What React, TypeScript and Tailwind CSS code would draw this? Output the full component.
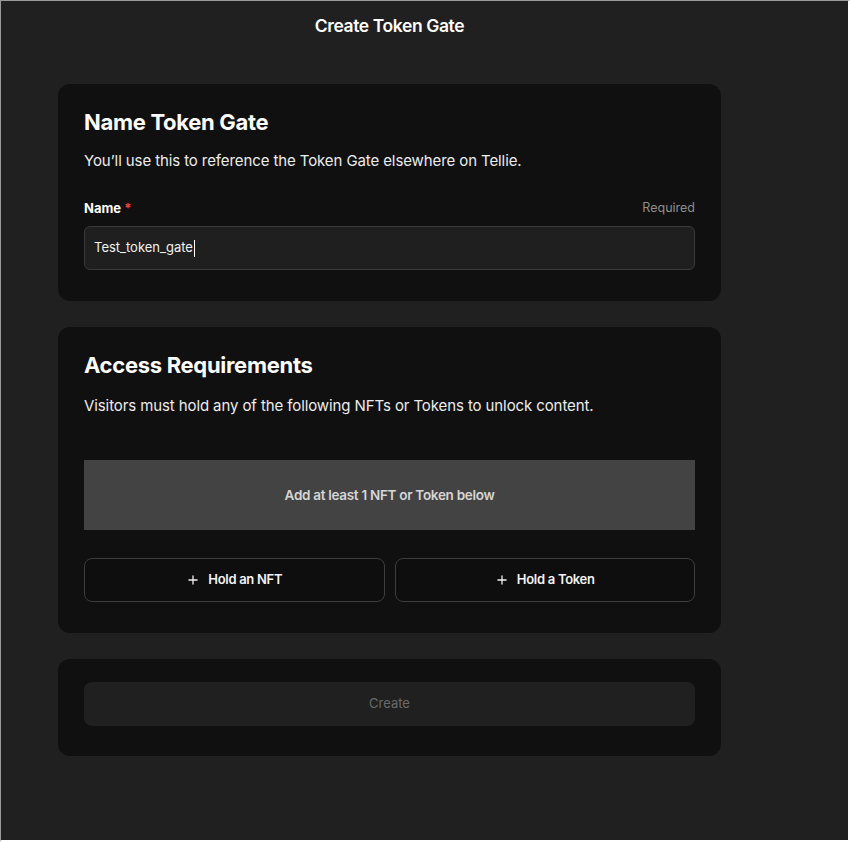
import { Plus } from 'lucide-react';

// Ambil satu kartu dengan gaya yang sama untuk tiap bagian form
function Card({ children, className = '' }: { children: React.ReactNode; className?: string }) {
  return <section className={`rounded-[12px] bg-[#101010] px-[26px] ${className}`}>{children}</section>;
}

export default function App() {
  return (
    <div
      className="h-[842px] w-[850px] overflow-hidden border-l border-t border-[#9a9a9a] border-r-2 border-b-2 border-r-white border-b-white bg-[#202020] text-white"
      style={{ fontFamily: 'Inter, "Liberation Sans", sans-serif' }}
    >
      <div className="ml-[57px] w-[663px]">
        {/* HEADER */}
        <h1 className="pt-[14px] text-center text-[17.5px] font-semibold leading-[22px] tracking-[-0.4px]">
          Create Token Gate
        </h1>

        {/* NAMA TOKEN GATE */}
        <Card className="mt-[47px] pt-[24px] pb-[31px]">
          <h2 className="text-[22px] font-bold leading-[28px] tracking-[-0.3px]">Name Token Gate</h2>
          <p className="mt-[15px] text-[15px] leading-[20px] text-[#ececec] tracking-[-0.1px]">
            You’ll use this to reference the Token Gate elsewhere on Tellie.
          </p>
          <div className="mt-[29px] flex items-end justify-between">
            <span className="text-[13px] font-bold leading-[16px]">
              Name <span className="text-[#e5484d]">*</span>
            </span>
            <span className="text-[12.5px] leading-[16px] text-[#8e8e8e]">Required</span>
          </div>
          <div className="mt-[10px] flex h-[44px] items-center rounded-[6px] border border-[#3a3a3a] bg-[#1f1f1f] px-[9px]">
            <span className="text-[13px] text-[#f2f2f2]">Test_token_gate</span>
            <span className="ml-[1px] h-[17px] w-[1px] bg-white" />
          </div>
        </Card>

        {/* SYARAT AKSES */}
        <Card className="mt-[26px] pt-[24px] pb-[31px]">
          <h2 className="text-[22px] font-bold leading-[28px] tracking-[-0.3px]">Access Requirements</h2>
          <p className="mt-[17px] text-[15px] leading-[20px] text-[#ececec] tracking-[-0.1px]">
            Visitors must hold any of the following NFTs or Tokens to unlock content.
          </p>
          <div className="mt-[44px] flex h-[70px] items-center justify-center bg-[#434343]">
            <span className="text-[13.5px] font-semibold tracking-[-0.3px] text-[#d6d6d6]">
              Add at least 1 NFT or Token below
            </span>
          </div>
          <div className="mt-[28px] grid grid-cols-2 gap-[10px]">
            {['Hold an NFT', 'Hold a Token'].map((label) => (
              <button
                key={label}
                className="flex h-[44px] items-center justify-center gap-[8px] rounded-[8px] border border-[#3d3d3d] bg-[#0e0e0e] text-[13px] font-semibold tracking-[-0.3px] text-[#f2f2f2]"
              >
                <Plus size={14} strokeWidth={2.2} />
                {label}
              </button>
            ))}
          </div>
        </Card>

        {/* TOMBOL BUAT */}
        <Card className="mt-[26px] pt-[23px] pb-[30px]">
          <button className="flex h-[44px] w-full items-center justify-center rounded-[8px] bg-[#202020] text-[13px] text-[#6a6a6a]">
            Create
          </button>
        </Card>
      </div>
    </div>
  );
}
